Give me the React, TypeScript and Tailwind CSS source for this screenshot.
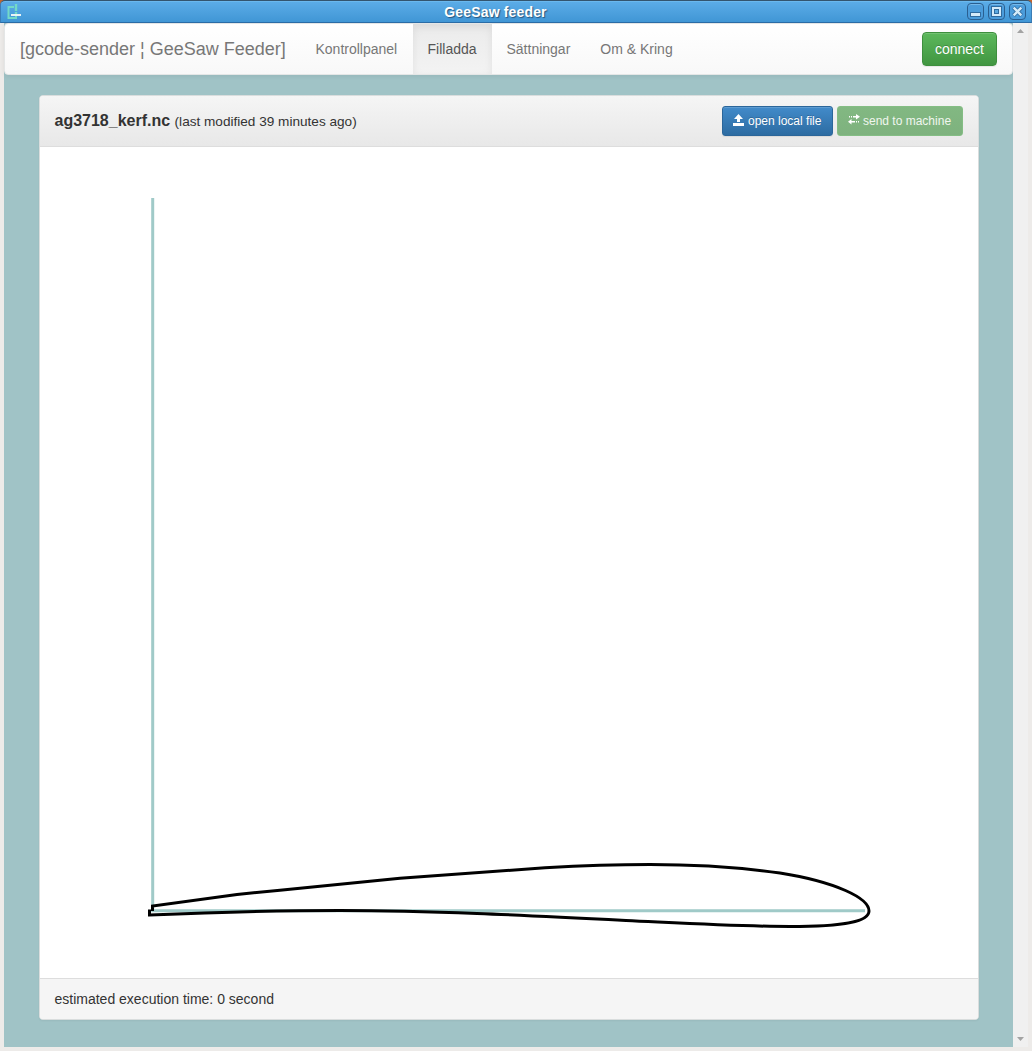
import type { ReactNode } from "react";

function WindowButton({ children }: { children: ReactNode }) {
  return (
    <span className="flex h-[17px] w-[17px] items-center justify-center rounded-[4px] border border-[#2a5f90] bg-[#4b9cdb] shadow-[inset_0_1px_0_#75b8ea]">
      <svg width="15" height="15" viewBox="0 0 15 15" shapeRendering="crispEdges">{children}</svg>
    </span>
  );
}

function TitleBar() {
  return (
    <header className="bg-[#c5652c]">
      <div className="relative flex h-[23px] items-center rounded-t-[5px] border-x border-t border-b border-x-[#3b7db5] border-t-[#33556f] border-b-[#2b6ca6] bg-linear-to-b from-[#5cade8] to-[#4096d5] shadow-[inset_0_1px_0_#6ab8ee]">
        <svg className="ml-[5px]" width="16" height="17" viewBox="0 0 16 17" fill="none">
          <path d="M8 4H2.5v11H10v-2" stroke="#73d9c8" strokeWidth="2" />
          <path d="M10 1v7M10 9v2" stroke="#73d9c8" strokeWidth="2.4" />
          <path d="M5 12h10" stroke="#e9f4f5" strokeWidth="2" />
        </svg>
        <span className="flex-1 pl-[2px] text-center text-[14px] leading-[20px] font-bold tracking-[0.16px] text-white [text-shadow:1px_1px_1px_#28557c]">
          GeeSaw feeder
        </span>
        <div className="mr-[5px] flex gap-[4px]">
          <WindowButton>
            <path d="M2 8h11v5H2z" fill="#2f6b9f" />
            <path d="M3 9h9v3H3z" fill="#d4eaf9" />
          </WindowButton>
          <WindowButton>
            <path d="M2 2h11v11H2z" fill="#2f6b9f" />
            <path d="M3 3h9v9H3z" fill="#d4eaf9" />
            <path d="M5 5h5v5H5z" fill="#2f6b9f" />
            <path d="M6 6h3v3H6z" fill="#5ba8e0" />
          </WindowButton>
          <WindowButton>
            <path d="M3.5 3.5l8 8M11.500 3.5l-8 8" stroke="#2f6b9f" strokeWidth="4" shapeRendering="auto" />
            <path d="M3.700 3.700l7.600 7.600M11.300 3.700l-7.600 7.600" stroke="#d4eaf9" strokeWidth="2.400" shapeRendering="auto" />
          </WindowButton>
        </div>
      </div>
    </header>
  );
}

function NavBar() {
  return (
    <nav className="flex h-[52px] rounded-[4px] border border-[#e4e6e6] bg-linear-to-b from-white to-[#f8f8f8] text-[14px] leading-5 text-[#777] shadow-[inset_0_1px_0_rgba(255,255,255,.15),0_1px_5px_rgba(0,0,0,.075)]">
      <a className="w-[296px] py-[15px] pl-[15px] text-[18px] leading-[20px] whitespace-nowrap">[gcode-sender ¦ GeeSaw Feeder]</a>
      <a className="w-[112px] px-[14.5px] py-[15px]">Kontrollpanel</a>
      <a className="w-[79px] bg-linear-to-b from-[#ebebeb] to-[#f3f3f3] py-[15px] pl-[14.5px] text-[#555] shadow-[inset_0_3px_9px_rgba(0,0,0,.075)]">Filladda</a>
      <a className="px-[15px] py-[15px] pl-[14.5px]">Sättningar</a>
      <a className="px-[15px] py-[15px]">Om &amp; Kring</a>
      <button className="mt-[8px] mr-[15px] ml-auto h-[34px] w-[75px] rounded-[4px] border border-[#3e8f3e] bg-linear-to-b from-[#5cb85c] to-[#419641] text-white shadow-[inset_0_1px_0_rgba(255,255,255,.15),0_1px_1px_rgba(0,0,0,.075)] [text-shadow:0_-1px_0_rgba(0,0,0,.2)]">connect</button>
    </nav>
  );
}

function UploadIcon() {
  return (
    <svg className="-mt-[2px]" width="11" height="12" viewBox="0 0 11 12" fill="white">
      <path d="M5.500 0L10 5H7v3H4V5H1zM0 9h11v3H0z" />
    </svg>
  );
}

function TransferIcon() {
  return (
    <svg className="-mt-[3px]" width="12" height="11" viewBox="0 0 12 11" fill="white">
      <path d="M8 0l4 2.800-4 2.700V3.500H5v-1.500h3zM3 2h1v1.500H3zM1 2h1v1.500H1zM3.500 5v2H7v1.500H3.500v2L0 7.800zM8 7h1v1.500H8zM10 7h1v1.500h-1z" />
    </svg>
  );
}

function ToolpathPlot() {
  return (
    <svg className="block h-[831px] w-[938px]" viewBox="40 147 938 831" fill="none">
      <path d="M152.7 198V910.8H865" stroke="#a0cac8" strokeWidth="3" />
      <path
        d="M152.5 911V906L237 894.5L280 890.2L400 878.3L545 867.8C590 865.2 620 864.5 650 864.5C706 864.5 748 868.5 780 873C836 882 869 898 869 911C869 921 846 926.5 790 926.5C742 926.5 690 923.5 626 920.5C520 915 430 910.5 340 910.5C278 910.5 210 912.5 149.5 915V909.5"
        stroke="black"
        strokeWidth="3"
        strokeLinejoin="miter"
      />
    </svg>
  );
}

function FilePanel() {
  return (
    <section className="mx-[35px] mt-[20px] h-[925px] w-[940px] overflow-hidden rounded-[4px] border border-[#d9dddd] bg-white shadow-[0_1px_2px_rgba(0,0,0,.05)]">
      <div className="flex h-[51px] items-center border-b border-[#ddd] bg-linear-to-b from-[#f5f5f5] to-[#e8e8e8] pr-[15px] pl-[14.5px]">
        <h3 className="flex-1 pt-[1px] text-[16px] leading-[18px] font-bold">
          ag3718_kerf.nc <small className="text-[13.6px] font-normal">(last modified 39 minutes ago)</small>
        </h3>
        <div className="flex gap-[4px] text-[12px] leading-[18px] text-white">
          <button className="flex h-[30px] w-[111px] items-center gap-[4px] rounded-[3px] border border-[#2b669a] bg-linear-to-b from-[#428bca] to-[#2d6ca2] pl-[10px] whitespace-nowrap shadow-[inset_0_1px_0_rgba(255,255,255,.15),0_1px_1px_rgba(0,0,0,.075)] [text-shadow:0_-1px_0_rgba(0,0,0,.2)]">
            <UploadIcon />
            <span>open local file</span>
          </button>
          <button className="flex h-[30px] w-[126px] items-center gap-[3px] rounded-[3px] border border-[#84bd84] bg-linear-to-b from-[#82b882] to-[#7eb27e] pl-[10px] whitespace-nowrap text-[#f0f6ef]">
            <TransferIcon />
            <span>send to machine</span>
          </button>
        </div>
      </div>
      <ToolpathPlot />
      <footer className="h-[41px] border-t border-[#ddd] bg-[#f5f5f5] px-[14.5px] py-[10px] text-[14px] leading-5">estimated execution time: 0 second</footer>
    </section>
  );
}

function ScrollBar() {
  return (
    <aside className="flex w-[15px] flex-col items-center justify-between bg-[#f0f0f0] pt-[6px] pb-[6px]">
      <svg width="7" height="4" viewBox="0 0 7 4" fill="#a3a3a3"><path d="M3.5 0L7 4H0z" /></svg>
      <svg width="7" height="4" viewBox="0 0 7 4" fill="#a3a3a3"><path d="M0 0h7L3.5 4z" /></svg>
    </aside>
  );
}

export default function App() {
  return (
    <div className="h-[1051px] w-[1032px] overflow-hidden bg-[#edebe9] font-['Liberation_Sans',Arial,sans-serif] text-[#333]">
      <TitleBar />
      <div className="mx-[4px] flex h-[1024px]">
        <main className="w-[1009px] bg-[#a0c3c6]">
          <NavBar />
          <FilePanel />
        </main>
        <ScrollBar />
      </div>
    </div>
  );
}
